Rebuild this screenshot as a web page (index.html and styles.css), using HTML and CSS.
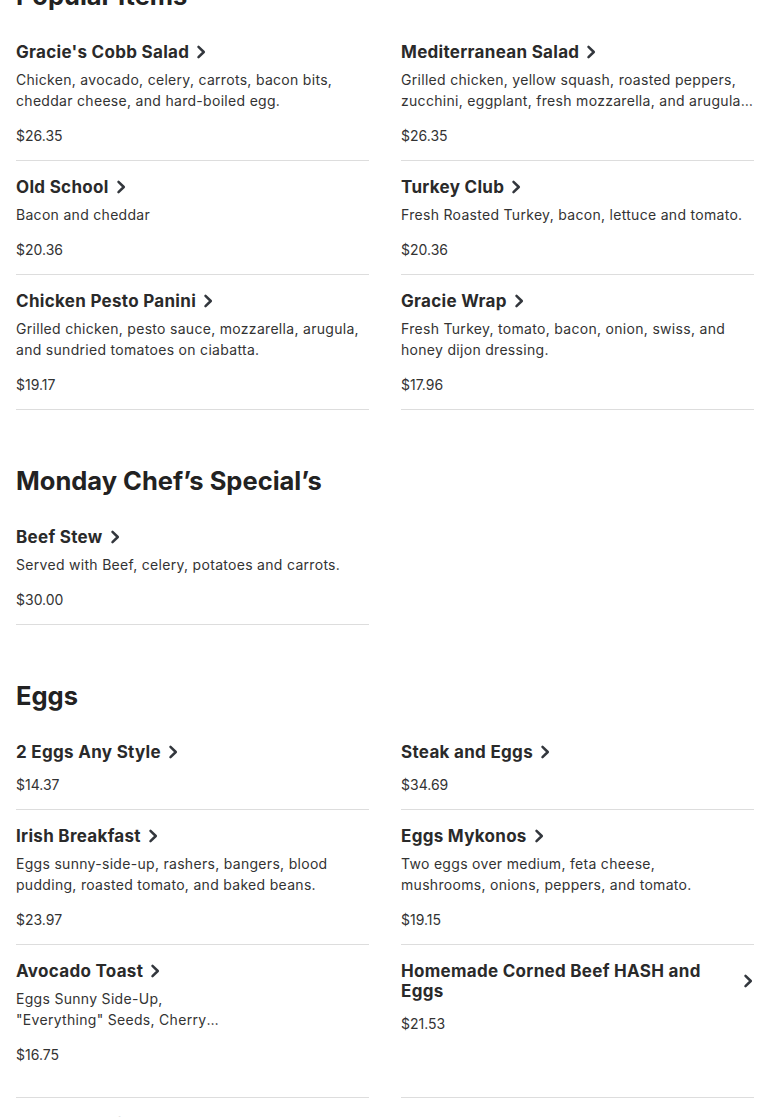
FILE: index.html
```html
<!DOCTYPE html>
<html lang="en">
<head>
<meta charset="utf-8">
<title>Menu</title>
<link rel="stylesheet" href="styles.css">
</head>
<body>
<main class="menu">
  <section class="section">
    <h2 class="section-title">Popular Items</h2>
    <div class="grid">
      <a class="item" href="#">
        <div class="item-head"><h3 class="item-name">Gracie's Cobb Salad</h3><svg class="chev" viewBox="0 0 12 14"><path d="M3.5 1.8 L8.8 7 L3.5 12.2"/></svg></div>
        <p class="item-desc">Chicken, avocado, celery, carrots, bacon bits, cheddar cheese, and hard-boiled egg.</p>
        <p class="item-price">$26.35</p>
      </a>
      <a class="item" href="#">
        <div class="item-head"><h3 class="item-name">Mediterranean Salad</h3><svg class="chev" viewBox="0 0 12 14"><path d="M3.5 1.8 L8.8 7 L3.5 12.2"/></svg></div>
        <p class="item-desc">Grilled chicken, yellow squash, roasted peppers, zucchini, eggplant, fresh mozzarella, and arugula with balsamic vinaigrette.</p>
        <p class="item-price">$26.35</p>
      </a>
      <a class="item" href="#">
        <div class="item-head"><h3 class="item-name">Old School</h3><svg class="chev" viewBox="0 0 12 14"><path d="M3.5 1.8 L8.8 7 L3.5 12.2"/></svg></div>
        <p class="item-desc">Bacon and cheddar</p>
        <p class="item-price">$20.36</p>
      </a>
      <a class="item" href="#">
        <div class="item-head"><h3 class="item-name">Turkey Club</h3><svg class="chev" viewBox="0 0 12 14"><path d="M3.5 1.8 L8.8 7 L3.5 12.2"/></svg></div>
        <p class="item-desc">Fresh Roasted Turkey, bacon, lettuce and tomato.</p>
        <p class="item-price">$20.36</p>
      </a>
      <a class="item" href="#">
        <div class="item-head"><h3 class="item-name">Chicken Pesto Panini</h3><svg class="chev" viewBox="0 0 12 14"><path d="M3.5 1.8 L8.8 7 L3.5 12.2"/></svg></div>
        <p class="item-desc">Grilled chicken, pesto sauce, mozzarella, arugula, and sundried tomatoes on ciabatta.</p>
        <p class="item-price">$19.17</p>
      </a>
      <a class="item" href="#">
        <div class="item-head"><h3 class="item-name">Gracie Wrap</h3><svg class="chev" viewBox="0 0 12 14"><path d="M3.5 1.8 L8.8 7 L3.5 12.2"/></svg></div>
        <p class="item-desc">Fresh Turkey, tomato, bacon, onion, swiss, and honey dijon dressing.</p>
        <p class="item-price">$17.96</p>
      </a>
    </div>
  </section>

  <section class="section">
    <h2 class="section-title">Monday Chef’s Special’s</h2>
    <div class="grid">
      <a class="item" href="#">
        <div class="item-head"><h3 class="item-name">Beef Stew</h3><svg class="chev" viewBox="0 0 12 14"><path d="M3.5 1.8 L8.8 7 L3.5 12.2"/></svg></div>
        <p class="item-desc">Served with Beef, celery, potatoes and carrots.</p>
        <p class="item-price">$30.00</p>
      </a>
    </div>
  </section>

  <section class="section">
    <h2 class="section-title">Eggs</h2>
    <div class="grid">
      <a class="item" href="#">
        <div class="item-head"><h3 class="item-name">2 Eggs Any Style</h3><svg class="chev" viewBox="0 0 12 14"><path d="M3.5 1.8 L8.8 7 L3.5 12.2"/></svg></div>
        <p class="item-price">$14.37</p>
      </a>
      <a class="item" href="#">
        <div class="item-head"><h3 class="item-name">Steak and Eggs</h3><svg class="chev" viewBox="0 0 12 14"><path d="M3.5 1.8 L8.8 7 L3.5 12.2"/></svg></div>
        <p class="item-price">$34.69</p>
      </a>
      <a class="item" href="#">
        <div class="item-head"><h3 class="item-name">Irish Breakfast</h3><svg class="chev" viewBox="0 0 12 14"><path d="M3.5 1.8 L8.8 7 L3.5 12.2"/></svg></div>
        <p class="item-desc">Eggs sunny-side-up, rashers, bangers, blood pudding, roasted tomato, and baked beans.</p>
        <p class="item-price">$23.97</p>
      </a>
      <a class="item" href="#">
        <div class="item-head"><h3 class="item-name">Eggs Mykonos</h3><svg class="chev" viewBox="0 0 12 14"><path d="M3.5 1.8 L8.8 7 L3.5 12.2"/></svg></div>
        <p class="item-desc">Two eggs over medium, feta cheese,<br>mushrooms, onions, peppers, and tomato.</p>
        <p class="item-price">$19.15</p>
      </a>
      <a class="item item--tall" href="#">
        <div class="item-head"><h3 class="item-name">Avocado Toast</h3><svg class="chev" viewBox="0 0 12 14"><path d="M3.5 1.8 L8.8 7 L3.5 12.2"/></svg></div>
        <p class="item-desc">Eggs Sunny Side-Up,<br>"Everything" Seeds, Cherry<br>Tomatoes, Pickled Onions.</p>
        <p class="item-price">$16.75</p>
      </a>
      <a class="item item--tall" href="#">
        <div class="item-head"><h3 class="item-name">Homemade Corned Beef HASH and Eggs</h3><svg class="chev" viewBox="0 0 12 14"><path d="M3.5 1.8 L8.8 7 L3.5 12.2"/></svg></div>
        <p class="item-price">$21.53</p>
      </a>
      <a class="item item--faint" href="#">
        <div class="item-head"><h3 class="item-name">Eggs Benedict</h3><svg class="chev" viewBox="0 0 12 14"><path d="M3.5 1.8 L8.8 7 L3.5 12.2"/></svg></div>
        <p class="item-price">$18.50</p>
      </a>
      <a class="item item--faint" href="#">
        <div class="item-head"><h3 class="item-name">Huevos Rancheros</h3><svg class="chev" viewBox="0 0 12 14"><path d="M3.5 1.8 L8.8 7 L3.5 12.2"/></svg></div>
        <p class="item-price">$19.75</p>
      </a>
    </div>
  </section>
</main>
</body>
</html>
```

FILE: styles.css
```css
* { box-sizing: border-box; }

body {
  margin: 0;
  background: #ffffff;
  color: #2b2b2b;
  font-family: Inter, "Open Sans", "DejaVu Sans", sans-serif;
}

.menu {
  padding: 0 16px;
  margin-top: -20px;
}

.section + .section {
  padding-top: 55px;
}

.section-title {
  margin: 0 0 14px;
  font-size: 25.5px;
  line-height: 32px;
  font-weight: 700;
  color: #222222;
}

.grid {
  display: grid;
  grid-template-columns: 1fr 1fr;
  column-gap: 32px;
}

.item {
  display: block;
  padding: 16px 0 14px;
  border-bottom: 1px solid #dddddd;
  color: inherit;
  text-decoration: none;
}

.item--tall {
  padding-bottom: 32px;
}

.item--faint {
  border-bottom: none;
  opacity: 0.25;
}

.item-head {
  display: flex;
  align-items: center;
}

.item-name {
  margin: 0;
  font-size: 17px;
  line-height: 20px;
  font-weight: 700;
  letter-spacing: 0.3px;
  color: #2a2a2a;
}

.chev {
  flex: none;
  width: 12px;
  height: 14px;
  margin-left: 6px;
  fill: none;
  stroke: #33373d;
  stroke-width: 2.5;
  stroke-linecap: round;
  stroke-linejoin: round;
}

.item-desc {
  margin: 7px 0 0;
  font-size: 14px;
  line-height: 21px;
  letter-spacing: 0.3px;
  color: #333333;
  display: -webkit-box;
  -webkit-line-clamp: 2;
  -webkit-box-orient: vertical;
  overflow: hidden;
}

.item-price {
  margin: 14px 0 0;
  font-size: 14px;
  line-height: 21px;
  color: #333333;
}

.item-head + .item-price {
  margin-top: 12px;
}
```
